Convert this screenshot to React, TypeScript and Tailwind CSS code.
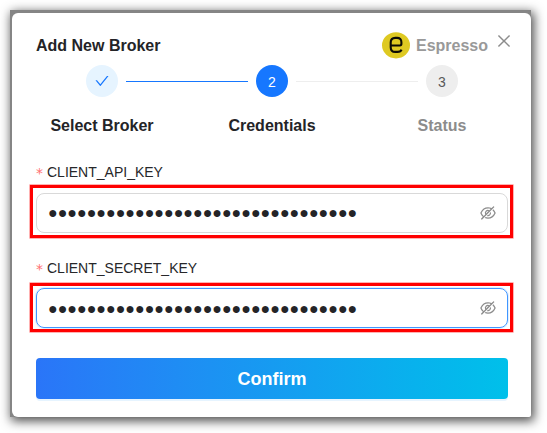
import React from "react";
import { AiOutlineCheck, AiOutlineClose, AiOutlineEyeInvisible } from "react-icons/ai";

function BrokerLogo() {
  return (
    <svg width="28" height="27" viewBox="0 0 28 27" aria-hidden="true">
      <ellipse cx="14" cy="13.3" rx="14" ry="13.1" fill="#dec922" />
      <path
        d="M9 13.5H17.9Q19.4 13.5 19.4 11.8V10.2Q19.4 5.9 15 5.9H13.2Q8.7 5.9 8.7 10.6V15.2Q8.7 19.9 13.2 19.9H15.4Q18.8 19.9 19.5 17.6"
        fill="none"
        stroke="#0c0b04"
        strokeWidth="2.1"
      />
    </svg>
  );
}

const stepStyles = {
  done: { circle: "bg-[#e6f4ff] text-[#1677ff]", title: "text-[#242427]" },
  active: { circle: "bg-[#1677ff] pt-[2px] text-white", title: "text-[#242427]" },
  wait: { circle: "bg-[#eeeeee] pt-[2px] text-[#595959]", title: "text-[#8c8c8c]" },
};

function Step({ state, title, children }: { state: keyof typeof stepStyles; title: string; children: React.ReactNode }) {
  return (
    <li className="flex w-8 shrink-0 flex-col items-center">
      <span className={"flex size-8 items-center justify-center rounded-full text-[14px] " + stepStyles[state].circle}>
        {children}
      </span>
      <span className={"mt-[17px] whitespace-nowrap text-base leading-6 font-bold " + stepStyles[state].title}>{title}</span>
    </li>
  );
}

function SecretField({ label, focused = false }: { label: string; focused?: boolean }) {
  return (
    <div className="flex flex-col">
      <div className="flex h-[22px] items-center gap-1 pl-6 text-[14px] text-[#27272a]">
        <span className="w-[7px] pt-px font-['DejaVu_Sans',sans-serif] leading-none text-[#ff7072]">*</span>
        <span>{label}</span>
      </div>
      <div
        className={
          "ml-[18px] w-[483px] border-[3px] border-[#ff0000] px-[3px] shadow-[0_0_0_0.6px_#ff000080] " +
          (focused ? "mt-[4px] h-[49px] pt-[2px]" : "mt-[2px] h-[53px] pt-[5px]")
        }
      >
        <div
          className={
            "flex h-10 w-[472px] items-center justify-between rounded-lg border pr-[10px] pl-[11px] " +
            (focused ? "border-[#4096ff] shadow-[0_0_0_1px_#e0efff]" : "border-[#d9d9d9]")
          }
        >
          <span className={"text-base leading-6 text-[#242427] " + (focused ? "pt-[2px]" : "")}>{"●".repeat(32)}</span>
          <AiOutlineEyeInvisible className="size-[18px] text-[#8c8c8c]" />
        </div>
      </div>
    </div>
  );
}

export default function App() {
  return (
    <div className="h-[433px] w-[547px] overflow-hidden bg-white pt-[10px] pl-[10px] font-['Liberation_Sans',Arial,sans-serif]">
      <div className="h-[407px] w-[521px] bg-[#858585] pt-[3px] pl-[2px] shadow-[2px_3px_10px_1px_#000000b3]">
        <section className="flex h-[404px] w-[519px] flex-col rounded-[6px] rounded-br-[2px] bg-white">
          <header className="flex h-[52px] shrink-0 items-start pl-6">
            <h1 className="mt-[21px] text-base leading-6 font-bold text-[#242427]">Add New Broker</h1>
            <div className="mt-[19px] ml-auto flex items-center gap-[6px]">
              <BrokerLogo />
              <span className="text-base font-bold text-[#999999]">Espresso</span>
            </div>
            <button className="mt-5 mr-[19px] ml-2 flex size-4 items-center justify-center">
              <AiOutlineClose className="size-[18px] shrink-0 text-[#8c8c8c]" />
            </button>
          </header>
          <ol className="flex h-[72px] shrink-0 items-start gap-2 pr-[73px] pl-[74px]">
            <Step state="done" title="Select Broker">
              <AiOutlineCheck className="size-4" />
            </Step>
            <li className="mt-4 h-px flex-1 bg-[#1677ff]" />
            <Step state="active" title="Credentials">2</Step>
            <li className="mt-4 h-px flex-1 bg-[#eeeeee]" />
            <Step state="wait" title="Status">3</Step>
          </ol>
          <div className="mt-[24px] flex flex-col gap-[19px]">
            <SecretField label="CLIENT_API_KEY" />
            <SecretField label="CLIENT_SECRET_KEY" focused />
          </div>
          <button className="mx-6 mt-[26px] h-[41px] w-[472px] shrink-0 rounded-[4px] bg-linear-to-r from-[#2a75f8] via-[#169bf1] to-[#00c0ea] pt-[2px] text-[18px] font-bold text-white shadow-[0_2px_0_#e6f4ff]">
            Confirm
          </button>
        </section>
      </div>
    </div>
  );
}
